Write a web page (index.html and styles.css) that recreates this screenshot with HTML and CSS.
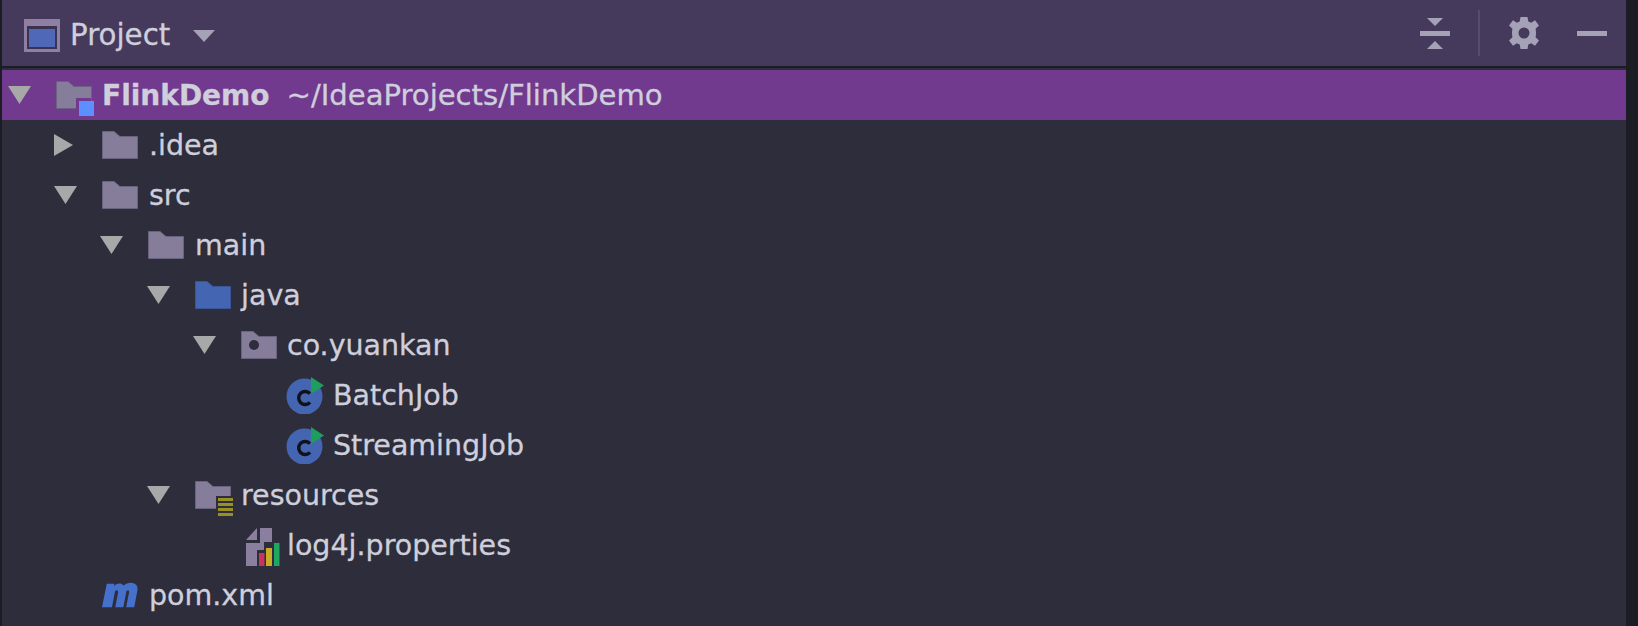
FILE: index.html
```html
<!DOCTYPE html>
<html>
<head>
    <title>Project</title>
    <link rel="stylesheet" href="styles.css">
</head>
<body>
    <svg class="defs" width="0" height="0">
        <symbol id="folder" viewBox="0 0 36 28">
            <path d="M0.5 0.5H12L18 5.5H35.5V27.5H0.5Z"/>
        </symbol>
        <symbol id="caretDown" viewBox="0 0 23 18">
            <path d="M0 0H23L11.5 18Z"/>
        </symbol>
        <symbol id="classIcon" viewBox="0 0 38 38">
            <circle cx="18.5" cy="20.5" r="18" fill="#4465b2"/>
            <path d="M24 17.6A6.5 6.5 0 1 0 24 26.4" fill="none" stroke="#111119" stroke-width="3.4"/>
            <path d="M25 1L38 9.5L25 18Z" fill="#1e9e5c"/>
        </symbol>
    </svg>

    <div class="panel">
        <div class="header">
            <svg class="project-icon" viewBox="0 0 36 33">
                <rect width="36" height="33" fill="#8d80a3"/>
                <rect x="3" y="7" width="30" height="23" fill="#3b3250"/>
                <rect x="5" y="10" width="26" height="18" fill="#4f68b8"/>
            </svg>
            <span class="title">Project</span>
            <svg class="title-caret" viewBox="0 0 22 12"><path d="M0 0H22L11 12Z"/></svg>
            <div class="actions">
                <svg class="action collapse" viewBox="0 0 30 31">
                    <path d="M7 0H23L15 8Z"/>
                    <rect y="13" width="30" height="5"/>
                    <path d="M7 31H23L15 23Z"/>
                </svg>
                <div class="divider"></div>
                <svg class="action gear" viewBox="0 0 32 32">
                    <path fill-rule="evenodd" d="M12.5 0H19.5L20.3 4.6L23.2 5.8L27 3.2L31 8.6L27.6 11.8L28 15L28 17L27.6 20.2L31 23.4L27 28.8L23.2 26.2L20.3 27.4L19.5 32H12.5L11.7 27.4L8.8 26.2L5 28.8L1 23.4L4.4 20.2L4 17V15L4.4 11.8L1 8.6L5 3.2L8.8 5.8L11.7 4.6ZM16 10.5A5.5 5.5 0 1 0 16 21.5A5.5 5.5 0 1 0 16 10.5Z"/>
                </svg>
                <svg class="action minimize" viewBox="0 0 30 5"><rect width="30" height="5"/></svg>
            </div>
        </div>

        <div class="tree">
            <div class="row selected depth-0">
                <svg class="arrow"><use href="#caretDown"/></svg>
                <div class="icon">
                    <svg class="folder"><use href="#folder"/></svg>
                    <span class="module-badge"></span>
                </div>
                <span class="name bold">FlinkDemo</span>
                <span class="path">~/IdeaProjects/FlinkDemo</span>
            </div>
            <div class="row depth-1">
                <svg class="arrow right" viewBox="0 0 19 22"><path d="M0 0V22L19 11Z"/></svg>
                <div class="icon"><svg class="folder"><use href="#folder"/></svg></div>
                <span class="name">.idea</span>
            </div>
            <div class="row depth-1">
                <svg class="arrow"><use href="#caretDown"/></svg>
                <div class="icon"><svg class="folder"><use href="#folder"/></svg></div>
                <span class="name">src</span>
            </div>
            <div class="row depth-2">
                <svg class="arrow"><use href="#caretDown"/></svg>
                <div class="icon"><svg class="folder"><use href="#folder"/></svg></div>
                <span class="name">main</span>
            </div>
            <div class="row depth-3">
                <svg class="arrow"><use href="#caretDown"/></svg>
                <div class="icon"><svg class="folder blue"><use href="#folder"/></svg></div>
                <span class="name">java</span>
            </div>
            <div class="row depth-4">
                <svg class="arrow"><use href="#caretDown"/></svg>
                <div class="icon">
                    <svg class="folder"><use href="#folder"/></svg>
                    <span class="package-dot"></span>
                </div>
                <span class="name">co.yuankan</span>
            </div>
            <div class="row depth-5">
                <span class="arrow"></span>
                <div class="icon"><svg class="class-icon"><use href="#classIcon"/></svg></div>
                <span class="name">BatchJob</span>
            </div>
            <div class="row depth-5">
                <span class="arrow"></span>
                <div class="icon"><svg class="class-icon"><use href="#classIcon"/></svg></div>
                <span class="name">StreamingJob</span>
            </div>
            <div class="row depth-3">
                <svg class="arrow"><use href="#caretDown"/></svg>
                <div class="icon">
                    <svg class="folder"><use href="#folder"/></svg>
                    <svg class="res-badge" viewBox="0 0 17 20">
                        <rect width="17" height="20" fill="#2d2d3b"/>
                        <path d="M2 2H17V5H2ZM2 7H17V10H2ZM2 12H17V15H2ZM2 17H17V20H2Z" fill="#9a8f22"/>
                    </svg>
                </div>
                <span class="name">resources</span>
            </div>
            <div class="row depth-4">
                <span class="arrow"></span>
                <div class="icon">
                    <svg class="props-icon" viewBox="0 0 34 38">
                        <path d="M0 12L11 0V12Z" fill="#8a7f9e"/>
                        <path d="M14 0H26V14H18V22H11V38H0V15H14Z" fill="#8a7f9e"/>
                        <rect x="13" y="25" width="5.5" height="13" fill="#c9345c"/>
                        <rect x="20" y="20" width="6" height="18" fill="#c9ad25"/>
                        <rect x="28" y="15" width="5.5" height="23" fill="#1fa660"/>
                    </svg>
                </div>
                <span class="name">log4j.properties</span>
            </div>
            <div class="row depth-1">
                <span class="arrow"></span>
                <div class="icon">
                    <svg class="maven-icon" viewBox="0 0 38 26">
                        <path d="M0 26L5 1H13L12.6 3.5C15 0.5 20 -0.5 23 3C26 0 31 -0.5 34.5 1C38 2.5 38 7 37 10L34 26H25.5L28.6 10C29 8 27 7.2 25.8 9L22.5 26H14L17 10C17.4 8 15 7.2 13.8 9L10.5 26Z" fill="#4570cc"/>
                    </svg>
                </div>
                <span class="name">pom.xml</span>
            </div>
        </div>
    </div>
</body>
</html>
```

FILE: styles.css
```css
html, body { margin: 0; height: 100%; }
body { background-color: #1c1c24; font-family: "DejaVu Sans", sans-serif; overflow: hidden; -webkit-text-stroke: 0.3px; }
.defs { display: block; height: 0; }
.panel { margin-left: 2px; width: 1624px; height: 626px; background-color: #2d2d3b; }

.header { display: flex; align-items: center; height: 68px; padding-left: 22px; padding-right: 19px; box-sizing: border-box; background-color: #463a5c; border-bottom: 2px solid #1c1c24; }
.project-icon { width: 36px; height: 33px; margin-top: 5px; }
.title { margin-left: 10px; margin-top: 4px; font-size: 29.3px; color: #cfcfdc; }
.title-caret { width: 22px; height: 12px; margin-left: 23px; margin-top: 5px; fill: #a5a1b6; }
.actions { display: flex; align-items: center; margin-left: auto; }
.action { fill: #a5a1b6; display: block; }
.collapse { width: 30px; height: 31px; }
.divider { width: 2px; height: 46px; margin: 0 28px; background-color: #574c6c; }
.gear { width: 32px; height: 32px; }
.minimize { width: 30px; height: 5px; margin-left: 37px; }

.tree { margin-top: 2px; }
.row { display: flex; align-items: center; height: 50px; font-size: 28.5px; color: #cfcfdc; white-space: nowrap; }
.row.selected { background-color: #713a8f; }
.depth-0 { padding-left: 6px; }
.depth-1 { padding-left: 52px; }
.depth-2 { padding-left: 98px; }
.depth-3 { padding-left: 145px; }
.depth-4 { padding-left: 191px; }
.depth-5 { padding-left: 237px; }

.arrow { display: block; width: 23px; height: 18px; margin-right: 25px; fill: #a8a8a8; flex: none; }
.arrow.right { width: 19px; height: 22px; margin-right: 29px; }
.icon { position: relative; display: flex; align-items: center; width: 36px; height: 38px; margin-right: 11px; flex: none; }
.depth-0 .icon { margin-right: 10px; }
.depth-3 .icon, .depth-4 .icon, .depth-5 .icon { margin-right: 10px; }
.folder { width: 36px; height: 28px; fill: #857d9a; stroke: #6a6380; }
.folder.blue { fill: #4465b2; stroke: #3a5697; }
.module-badge { position: absolute; right: -2px; bottom: -2px; width: 15px; height: 15px; background-color: #5c8fff; box-shadow: -3px -3px 0 #713a8f; }
.package-dot { position: absolute; left: 8px; top: 14px; width: 10px; height: 10px; border-radius: 50%; background-color: #2d2d3b; }
.res-badge { position: absolute; right: -2px; bottom: -2px; width: 17px; height: 20px; }
.class-icon { width: 38px; height: 38px; margin-left: -1px; flex: none; }
.props-icon { position: absolute; left: 5px; top: 2px; width: 34px; height: 38px; }
.maven-icon { width: 38px; height: 26px; }
.bold { font-weight: bold; font-size: 28px; }
.path { margin-left: 17px; font-size: 29.1px; }
```
